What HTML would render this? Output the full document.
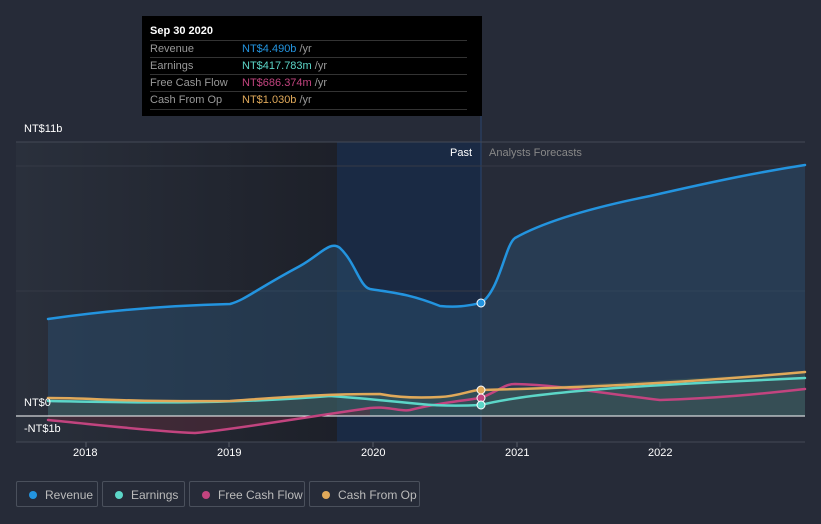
<!DOCTYPE html><html><head><style>
body{margin:0;width:821px;height:524px;background:#262b38;font-family:"Liberation Sans",sans-serif;overflow:hidden;position:relative}
.t{position:absolute;color:#fff;font-size:11px}
.tip{position:absolute;left:142px;top:16px;width:340px;height:100px;background:#000}
.tip .h{position:absolute;left:8px;top:9px;font-weight:bold;color:#fff;font-size:11px}
.tip .r{position:absolute;left:8px;width:317px;height:17px;border-top:1px solid #333;font-size:11px;color:#999;line-height:17px}
.tip .r span{position:absolute;left:92px}
.tip .r i{font-style:normal;color:#999}
.leg{position:absolute;top:481px;height:26px;border:1px solid #4a505c;border-radius:2px;color:#bbb;font-size:12px;line-height:26px;box-sizing:border-box}
.leg b{position:absolute;left:12px;top:9px;width:8px;height:8px;border-radius:50%}
.leg span{position:absolute;left:28px}
</style></head><body>
<svg width="821" height="524" style="position:absolute;left:0;top:0">
<defs><linearGradient id="g" x1="0" x2="1"><stop offset="0" stop-color="#2a303c"/><stop offset="1" stop-color="#1d2029"/></linearGradient></defs>
<rect x="16" y="142" width="321" height="300" fill="url(#g)"/>
<rect x="337" y="142" width="144" height="300" fill="#1a2a44"/>
<line x1="481" y1="116" x2="481" y2="442" stroke="#2a4670"/>
<line x1="16" y1="142" x2="805" y2="142" stroke="#444a56"/>
<line x1="16" y1="166" x2="805" y2="166" stroke="#353a46"/>
<line x1="16" y1="291" x2="805" y2="291" stroke="#353a46"/>
<line x1="16" y1="442" x2="805" y2="442" stroke="#444a56"/>
<path d="M48,319 C90,313 150,306 230,304 C245,300 255,290 300,266 C320,255 330,240 340,248 C355,262 360,287 370,289 C395,293 410,294 440,306 C460,308 470,305 481,303 C500,290 505,245 515,238 C540,224 580,210 650,196 C720,180 760,172 805,165 L805,416 L48,416Z" fill="#2a4a6a" opacity="0.55"/>
<path d="M48,398 C100,398 110,402 230,401 C300,396 330,394 380,394 C420,398 460,396 481,390 L805,372 L805,416 L48,416Z" fill="#4a6a5a" opacity="0.4"/>
<path d="M48,420 C100,425 150,431 195,433 C230,430 300,418 370,408 L370,416 L48,416Z" fill="#5a2a3a" opacity="0.5"/>
<line x1="16" y1="416" x2="805" y2="416" stroke="#fff"/>
<g fill="none" stroke-width="2.5" stroke-linecap="round">
<path d="M48,319 C90,313 150,306 230,304 C245,300 255,290 300,266 C320,255 330,240 340,248 C355,262 360,287 370,289 C395,293 410,294 440,306 C460,308 470,305 481,303 C500,290 505,245 515,238 C540,224 580,210 650,196 C720,180 760,172 805,165" stroke="#2394df"/>
<path d="M48,420 C100,425 150,431 195,433 C230,430 300,418 370,408 C390,406 400,412 410,410 C430,405 450,402 481,398 C500,390 505,384 515,384 C560,385 600,393 660,400 C720,398 760,394 805,389" stroke="#c2447f"/>
<path d="M48,401 C150,403 230,404 330,396 C360,398 380,400 420,404 C440,406 460,406 481,405 C520,395 600,388 700,383 L805,378" stroke="#5cd6c8"/>
<path d="M48,398 C100,398 110,402 230,401 C300,396 330,394 380,394 C400,398 420,398 440,397 C460,396 470,390 481,390 C560,388 660,385 805,372" stroke="#e0a95a"/>
</g>
<circle cx="481" cy="303" r="4" fill="#2394df" stroke="#fff"/>
<circle cx="481" cy="390" r="4" fill="#e0a95a" stroke="#fff"/>
<circle cx="481" cy="398" r="4" fill="#c2447f" stroke="#fff"/>
<circle cx="481" cy="405" r="4" fill="#5cd6c8" stroke="#fff"/>
<g stroke="#555b66"><line x1="86" y1="442" x2="86" y2="447"/><line x1="229" y1="442" x2="229" y2="447"/><line x1="373" y1="442" x2="373" y2="447"/><line x1="517" y1="442" x2="517" y2="447"/><line x1="660" y1="442" x2="660" y2="447"/></g>
</svg>
<div class="tip"><div class="h">Sep 30 2020</div>
<div class="r" style="top:24px">Revenue<span style="color:#2394df">NT$4.490b <i>/yr</i></span></div>
<div class="r" style="top:41px">Earnings<span style="color:#5cd6c8">NT$417.783m <i>/yr</i></span></div>
<div class="r" style="top:58px">Free Cash Flow<span style="color:#c2447f">NT$686.374m <i>/yr</i></span></div>
<div class="r" style="top:75px;border-bottom:1px solid #333">Cash From Op<span style="color:#e0a95a">NT$1.030b <i>/yr</i></span></div></div>
<div class="t" style="left:24px;top:123px">NT$11b</div>
<div class="t" style="left:24px;top:397px">NT$0</div>
<div class="t" style="left:24px;top:423px">-NT$1b</div>
<div class="t" style="left:450px;top:147px">Past</div>
<div class="t" style="left:489px;top:147px;color:#888">Analysts Forecasts</div>
<div class="t" style="left:73px;top:447px">2018</div>
<div class="t" style="left:217px;top:447px">2019</div>
<div class="t" style="left:361px;top:447px">2020</div>
<div class="t" style="left:505px;top:447px">2021</div>
<div class="t" style="left:648px;top:447px">2022</div>
<div class="leg" style="left:16px;width:82px"><b style="background:#2394df"></b><span>Revenue</span></div>
<div class="leg" style="left:102px;width:83px"><b style="background:#5cd6c8"></b><span>Earnings</span></div>
<div class="leg" style="left:189px;width:116px"><b style="background:#c2447f"></b><span>Free Cash Flow</span></div>
<div class="leg" style="left:309px;width:111px"><b style="background:#e0a95a"></b><span>Cash From Op</span></div>
</body></html>
